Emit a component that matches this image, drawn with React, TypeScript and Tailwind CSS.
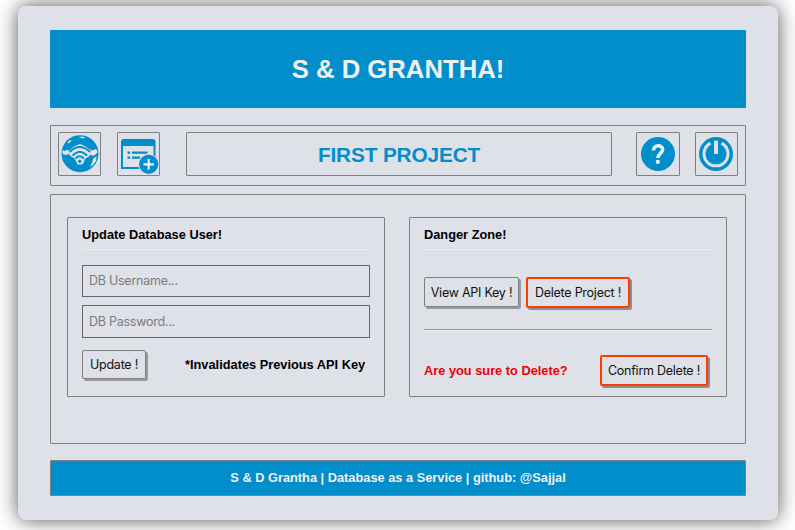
import type { ReactNode } from "react";

const helv = "font-['Liberation_Sans',Arial,sans-serif] font-bold";
const ui = "font-['Inter',sans-serif] text-[12.5px] tracking-[-0.25px]";

function IconBox({ children, className = "" }: { children: ReactNode; className?: string }) {
  return (
    <button className={`flex h-11 shrink-0 items-center justify-center rounded-[1px] border border-[#808080] ${className}`}>
      {children}
    </button>
  );
}

function GlobeIcon() {
  return (
    <svg viewBox="0 0 43 44" className="block h-11 w-[43px] max-w-none shrink-0">
      <circle cx="22" cy="21.700" r="18.500" fill="#028dcb" />
      <path
        d="M4.500 18L7 19L9 17.500L11 19L13 17L17 14L22 12L27 14L31 17L34 18.500L38 17L39.800 20L38 22L35 24L33 22.500L30 25L27 27L25.500 31L24 32.500H19.500L18 29L16 26L13 24.500L11 22L8 23L4.500 22Z"
        fill="#e2e4e8"
      />
      <path d="M9.500 10.500L11.500 8.500L13.500 8L12.500 10L10.500 11.500ZM21 4.800L26 4.800L27 5.800L24 6.500Z" fill="#e2e4e8" />
      <path d="M35 27L38.500 24L38 29L35 33L32 35L34 31Z" fill="#e2e4e8" />
      <g fill="none" stroke="#028dcb" strokeWidth="2.100" strokeLinecap="round">
        <path d="M12.300 19.500Q21.700 10.500 31.600 19.500" />
        <path d="M15.200 23Q21.700 16.500 28.400 23" />
        <path d="M18.200 26Q21.700 22.500 25.200 26" />
      </g>
      <circle cx="21.700" cy="29.200" r="1.700" fill="#028dcb" />
    </svg>
  );
}

function AddFormIcon() {
  return (
    <svg viewBox="0 0 43 44" className="block h-11 w-[43px] max-w-none shrink-0">
      <path d="M4 14V10Q4 7 7 7H35.500Q38.500 7 38.500 10V14Z" fill="#028dcb" />
      <path d="M5 13V36H23M37.500 13V27" fill="none" stroke="#028dcb" strokeWidth="2" />
      <path d="M10.500 20.700h2.700M10.500 25.700h2.700M15 20.700h15.500M15 25.700h8" stroke="#028dcb" strokeWidth="2.200" />
      <circle cx="31.700" cy="32.300" r="10.500" fill="#dee1e8" />
      <circle cx="31.700" cy="32.300" r="9.600" fill="#028dcb" />
      <path d="M26.500 32.300H37M31.700 27V37.500" stroke="#eef2f6" strokeWidth="2.200" />
    </svg>
  );
}

function HelpIcon() {
  return (
    <svg viewBox="0 0 44 44" className="block h-11 w-11 max-w-none shrink-0">
      <circle cx="22" cy="22" r="17" fill="#028dcb" />
      <path
        d="M17.500 18.500C17.500 12.300 26.700 12.500 26.700 17.600C26.700 21.300 21.900 21.500 21.900 26"
        fill="none"
        stroke="#edf1f5"
        strokeWidth="3.500"
      />
      <circle cx="21.800" cy="29.900" r="2.100" fill="#edf1f5" />
    </svg>
  );
}

function PowerIcon() {
  return (
    <svg viewBox="0 0 43 44" className="block h-11 w-[43px] max-w-none shrink-0">
      <circle cx="21" cy="22" r="17" fill="#028dcb" />
      <path d="M15.500 11.200A12 12 0 1 0 26.500 11.200" fill="none" stroke="#dee1e8" strokeWidth="3" />
      <path d="M21 8.700V22" stroke="#dee1e8" strokeWidth="4" />
    </svg>
  );
}

function Button({ children, className }: { children: ReactNode; className: string }) {
  return (
    <button
      className={`${ui} flex shrink-0 items-center justify-center rounded-[2px] whitespace-nowrap text-[#111] ${className}`}
    >
      {children}
    </button>
  );
}

const gray = "border border-[#808080] shadow-[2px_2px_0_#999]";
const danger = "border-2 border-[#ff3b00] pt-0.5 shadow-[2px_2px_0_#8d8d92]";

export default function App() {
  return (
    <div className="h-[530px] w-[795px] overflow-hidden bg-white pt-1.5 pl-[18px]">
      <div className="flex h-[514px] w-[760px] flex-col rounded-lg bg-[#dee1e8] px-8 pt-6 shadow-[0_0_20px_#555]">
        <header className="flex h-[78px] shrink-0 items-center justify-center rounded-[1px] bg-[#028dcb]">
          <h1 className={`${helv} pt-0.5 text-[25.7px] leading-none text-[#f0f0f0]`}>S &amp; D GRANTHA!</h1>
        </header>

        <nav className="mt-[17px] flex h-[61px] shrink-0 rounded-[1px] border border-[#808080] pt-1.5 pl-[7px]">
          <IconBox className="w-[43px]"><GlobeIcon /></IconBox>
          <IconBox className="ml-4 w-[43px]"><AddFormIcon /></IconBox>
          <div className="ml-[26px] flex h-11 w-[426px] items-center justify-center rounded-[1px] border border-[#808080]">
            <h2 className={`${helv} pt-0.5 text-[20.8px] leading-none tracking-[-0.15px] text-[#028dcb]`}>FIRST PROJECT</h2>
          </div>
          <IconBox className="ml-6 w-11"><HelpIcon /></IconBox>
          <IconBox className="ml-[15px] w-[43px]"><PowerIcon /></IconBox>
        </nav>

        <main className="mt-2 flex h-[250px] shrink-0 gap-6 rounded-[1px] border border-[#808080] pt-[22px] pl-4">
          <section className="flex h-[180px] w-[318px] flex-col rounded-[1px] border border-[#808080] px-3.5">
            <h3 className={`${helv} mt-[9px] text-[12.8px] leading-4 text-black`}>Update Database User!</h3>
            <div className="mt-1.5 h-px bg-[#eeeeee]" />
            <input
              placeholder="DB Username..."
              className={`${ui} mt-[15px] h-8 shrink-0 border border-[#62656b] px-1.5 pb-0.5 placeholder:text-[#7b7b7e]`}
            />
            <input
              placeholder="DB Password..."
              className={`${ui} mt-2 h-[33px] shrink-0 border border-[#62656b] px-1.5 placeholder:text-[#7b7b7e]`}
            />
            <div className="mt-3 flex h-[29px] items-center">
              <Button className={`h-[29px] w-16 pt-px ${gray}`}>Update !</Button>
              <span className={`${helv} ml-[39px] text-[12.8px] whitespace-nowrap text-black`}>*Invalidates Previous API Key</span>
            </div>
          </section>

          <section className="flex h-[180px] w-[318px] flex-col rounded-[1px] border border-[#808080] px-3.5">
            <h3 className={`${helv} mt-[9px] text-[12.8px] leading-4 text-black`}>Danger Zone!</h3>
            <div className="mt-1.5 h-px bg-[#eeeeee]" />
            <div className="mt-[27px] flex h-[31px] gap-[7px]">
              <Button className={`h-[30px] w-[95px] pt-[3px] ${gray}`}>View API Key !</Button>
              <Button className={`h-[31px] w-[104px] ${danger}`}>Delete Project !</Button>
            </div>
            <div className="mt-[21px] h-0.5 shrink-0 border-t border-b border-t-[#999999] border-b-[#eeeeee]" />
            <div className="mt-6 flex h-[31px] items-center">
              <span className={`${helv} w-44 text-[12.8px] whitespace-nowrap text-[#f00000]`}>Are you sure to Delete?</span>
              <Button className={`h-[31px] w-[108px] ${danger}`}>Confirm Delete !</Button>
            </div>
          </section>
        </main>

        <footer className="mt-4 flex h-9 shrink-0 items-center justify-center rounded-[1px] border border-[#808080] bg-[#028dcb]">
          <p className={`${helv} pt-px text-[12.8px] leading-none text-[#f0f0f0]`}>S &amp; D Grantha | Database as a Service | github: @Sajjal</p>
        </footer>
      </div>
    </div>
  );
}
